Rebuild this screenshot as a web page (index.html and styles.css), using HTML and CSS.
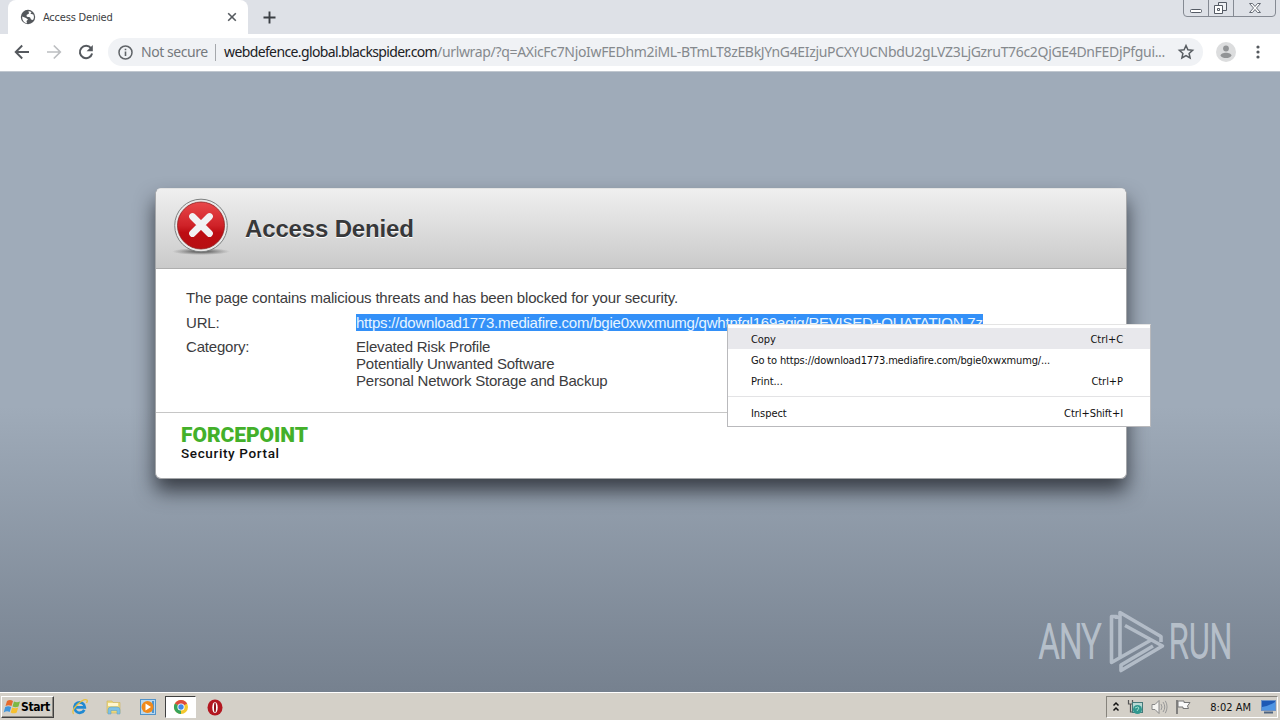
FILE: index.html
```html
<!DOCTYPE html>
<html lang="en">
<head>
<meta charset="utf-8">
<title>Access Denied</title>
<link rel="stylesheet" href="styles.css">
</head>
<body>
<div class="screen">
  <header class="tabstrip">
    <div class="tab">
      <svg class="favicon" width="16" height="16" viewBox="0 0 16 16"><circle cx="8" cy="8" r="7.2" fill="#54585c"/><path d="M2.2 7.5 6 9l2 1.500-1.500 1.500.5 2.300C4 14 2 11 2.200 7.500zM8.500 2l3 1-1 1.800 2.800.7c1 2 .8 4-.3 5.500l-2-.5-1-2.300-3.200-.5L6.500 6 9 4.600z" fill="#fff"/></svg>
      <span class="tab-title">Access Denied</span>
      <svg class="tab-close" width="10" height="10" viewBox="0 0 10 10"><path d="M1.200 1.200l7.600 7.600M8.800 1.200L1.200 8.800" stroke="#555a5f" stroke-width="1.600"/></svg>
    </div>
    <svg class="new-tab" width="13" height="13" viewBox="0 0 13 13"><path d="M6.500.5v12M.5 6.500h12" stroke="#3b3f44" stroke-width="1.900"/></svg>
    <svg class="window-buttons" width="94" height="18" viewBox="0 0 94 18"><path d="M.5 0v13q0 3.500 3.500 3.500h85q3.500 0 3.500-3.500V0M25.500 0v16M50.500 0v16" fill="none" stroke="#858a93"/><rect x="7.500" y="9.500" width="11" height="3" rx="1" fill="#fff" stroke="#555b65"/><path d="M35.500 2.500h8v8h-8z" fill="#eef0f3" stroke="#555b65"/><path d="M31.500 5.500h8v8h-8z" fill="#fff" stroke="#555b65"/><path d="M34.500 8.500h2v2h-2z" fill="none" stroke="#555b65"/><path d="M66.500 3.500h3l2.500 3 2.500-3h3l-4 4.500 4 4.500h-3l-2.500-3-2.500 3h-3l4-4.500z" fill="#fff" stroke="#666c76"/></svg>
  </header>

  <nav class="toolbar">
    <svg width="16" height="16" viewBox="0 0 16 16" class="back"><path d="M15 8H2M8.200 1.500 1.700 8l6.500 6.500" fill="none" stroke="#55595e" stroke-width="1.900"/></svg>
    <svg width="16" height="16" viewBox="0 0 16 16" class="forward"><path d="M1 8h13M7.800 1.500 14.300 8l-6.500 6.500" fill="none" stroke="#bcbec1" stroke-width="1.700"/></svg>
    <svg width="16" height="16" viewBox="0 0 16 16" class="reload"><path d="M13 4.200A6.200 6.200 0 1 0 14.100 9.500" fill="none" stroke="#55595e" stroke-width="2"/><path d="M14.800 1v6.200H8.600z" fill="#55595e"/></svg>
    <div class="omnibox">
      <svg width="15" height="15" viewBox="0 0 15 15"><circle cx="7.500" cy="7.500" r="6.500" fill="none" stroke="#606468" stroke-width="1.500"/><path d="M7.500 6.500V11M7.500 3.700v1.600" stroke="#606468" stroke-width="1.600"/></svg>
      <span class="not-secure">Not secure</span>
      <span class="divider"></span>
      <span class="host">webdefence.global.blackspider.com</span><span class="path">/urlwrap/?q=AXicFc7NjoIwFEDhm2iML-BTmLT8zEBkJYnG4EIzjuPCXYUCNbdU2gLVZ3LjGzruT76c2QjGE4DnFEDjPfgui...</span>
      <svg class="star" width="16" height="16" viewBox="0 0 16 16"><path d="M8 1.500l1.900 4.300 4.700.5-3.500 3.100 1 4.600L8 11.600 3.900 14l1-4.600L1.400 6.300l4.700-.5z" fill="none" stroke="#585d62" stroke-width="1.500"/></svg>
    </div>
    <svg class="avatar" width="20" height="20" viewBox="0 0 20 20"><circle cx="10" cy="10" r="10" fill="#dcddde"/><circle cx="10" cy="6.500" r="2.900" fill="#929496"/><path d="M4.500 13.700c0-4 11-4 11 0-2 3.200-9 3.200-11 0z" fill="#929496"/></svg>
    <svg class="more" width="4" height="16" viewBox="0 0 4 16"><g fill="#55595e"><circle cx="2" cy="3" r="1.600"/><circle cx="2" cy="8" r="1.600"/><circle cx="2" cy="13" r="1.600"/></g></svg>
  </nav>

  <main class="page">
    <section class="card">
      <div class="card-head">
        <svg width="60" height="60" viewBox="0 0 60 60">
          <defs>
            <linearGradient id="red" x1="0" y1="0" x2="0" y2="1"><stop offset="0" stop-color="#e9484a"/><stop offset=".5" stop-color="#cf2228"/><stop offset=".65" stop-color="#bd0d13"/><stop offset="1" stop-color="#b70e12"/></linearGradient>
            <radialGradient id="shade"><stop offset="0" stop-color="#333" stop-opacity=".9"/><stop offset="1" stop-color="#555" stop-opacity="0"/></radialGradient>
          </defs>
          <ellipse cx="30" cy="54.500" rx="29" ry="3.500" fill="url(#shade)"/>
          <circle cx="30" cy="28.500" r="26.300" fill="#e9e9e9" stroke="#7d8080" stroke-width="1"/>
          <circle cx="30" cy="28.500" r="23.500" fill="url(#red)" stroke="#8f2020" stroke-width=".8"/>
          <path d="M21.500 19.500l17 17M38.500 19.500l-17 17" stroke="#f1f1f3" stroke-width="6.800" stroke-linecap="round"/>
        </svg>
        <h1>Access Denied</h1>
      </div>
      <div class="card-body">
        <p class="message">The page contains malicious threats and has been blocked for your security.</p>
        <dl>
          <dt>URL:</dt>
          <dd><span class="selected">https://download1773.mediafire.com/bgie0xwxmumg/qwhtnfgl169agig/REVISED+QUATATION.7z</span></dd>
          <dt>Category:</dt>
          <dd><div>Elevated Risk Profile</div><div>Potentially Unwanted Software</div><div>Personal Network Storage and Backup</div></dd>
        </dl>
      </div>
      <div class="card-foot">
        <svg width="160" height="42" viewBox="0 0 160 42"><text class="brand" x="0" y="20" textLength="127" lengthAdjust="spacing">FORCEPOINT</text><text class="portal" x="0" y="36" textLength="98" lengthAdjust="spacing">Security Portal</text></svg>
      </div>
    </section>
    <svg class="watermark" width="240" height="70" viewBox="0 0 240 70">
      <text x="2" y="50" textLength="62" lengthAdjust="spacingAndGlyphs">ANY</text>
      <text x="132" y="50" textLength="63" lengthAdjust="spacingAndGlyphs">RUN</text>
      <g fill="none" stroke="#b9c2cd" stroke-width="3.600" stroke-linejoin="round">
        <path d="M79.500 11V8.500H74.500v46l40.500-23M83 50V4.500l41 24v5.500M88 17.500l37.500 20.500-41.500 24.500v-5.500l32-19"/>
      </g>
    </svg>
  </main>

  <div class="menu">
    <div class="item active"><span>Copy</span><span>Ctrl+C</span></div>
    <div class="item"><span class="goto">Go to https://download1773.mediafire.com/bgie0xwxmumg/...</span></div>
    <div class="item"><span>Print...</span><span>Ctrl+P</span></div>
    <div class="rule"></div>
    <div class="item"><span>Inspect</span><span>Ctrl+Shift+I</span></div>
  </div>

  <footer class="taskbar">
    <div class="start">
      <svg width="17" height="16" viewBox="0 0 17 16"><path d="M3 2q3-2 6 0L7.500 7q-3-1.500-6 0z" fill="#e66a2c"/><path d="M10 2.500q3 1.500 6 0l-1.500 5q-3 1.500-6 0z" fill="#7cb843"/><path d="M1.200 8q3-1.500 6 0l-1.500 5q-3-1.500-6 .5z" fill="#4196dc"/><path d="M8.200 8.500q3 1.500 6 0l-1.500 5q-3 1.700-6 0z" fill="#f6c02f"/></svg>
      <span>Start</span>
    </div>
    <div class="quick">
      <svg width="18" height="18" viewBox="0 0 18 18"><path d="M13.300 11.800A5.200 5.200 0 1 1 13.800 9.300H5" fill="none" stroke="#2089d2" stroke-width="2.700"/><path d="M2.500 16C-1 12 12-.5 16 2c1 1 0 2-.5 3" fill="none" stroke="#e8c03c" stroke-width="1.300"/></svg>
      <svg width="18" height="18" viewBox="0 0 18 18"><path d="M2 3h5l1 1.500h7V15H2z" fill="#ecd87d" stroke="#cdb45a" stroke-width=".6"/><path d="M3 5h10v3H3z" fill="#fff6ce"/><path d="M3 16v-4q0-3 3-3h6q3 0 3 3v4h-3v-3.500H6V16z" fill="#7dc1e5" stroke="#5c9dbf" stroke-width=".5"/></svg>
      <svg width="18" height="18" viewBox="0 0 18 18"><rect x="1.500" y="1.500" width="15" height="15" fill="#b8d8f0" stroke="#5293c9"/><rect x="13" y="3" width="2" height="12" fill="#4f94cc"/><circle cx="8.500" cy="9" r="6" fill="#f18a1c"/><path d="M6.500 5.500v7l5.500-3.500z" fill="#fff"/></svg>
      <div class="pressed"><svg width="16" height="16" viewBox="0 0 16 16"><circle cx="8" cy="8" r="7" fill="#f4c82e"/><path d="M8 8 1.900 4.500A7 7 0 0 1 14.100 4.500z" fill="#dd4b3e"/><path d="M8 8v7A7 7 0 0 1 1.900 4.500z" fill="#37a35b"/><circle cx="8" cy="8" r="3.600" fill="#fff"/><circle cx="8" cy="8" r="2.700" fill="#4289e8"/></svg></div>
      <svg width="16" height="17" viewBox="0 0 16 17"><ellipse cx="8" cy="8.500" rx="7.500" ry="8" fill="#b31720"/><ellipse cx="8" cy="8.500" rx="2.700" ry="5.500" fill="#fff"/><ellipse cx="8" cy="8.500" rx="1" ry="5" fill="#8d0d14"/></svg>
    </div>
    <div class="tray">
      <svg width="8" height="12" viewBox="0 0 8 12"><path d="M1.500 4.500 4 2l2.500 2.500M1.500 9.500 4 7l2.500 2.500" fill="none" stroke="#111" stroke-width="1.500"/></svg>
      <svg width="17" height="17" viewBox="0 0 17 17"><path d="M1.500 1v4h4V1M3.500 5v8h3" fill="none" stroke="#555" stroke-width="1.200"/><rect x="5.500" y="3.500" width="10" height="10" fill="#b8d9d4" stroke="#477a7a"/><circle cx="10.500" cy="10.500" r="4.500" fill="#31988f"/><path d="M8 9q3-2 4 0l-2 3" stroke="#a6e0cf" fill="none"/></svg>
      <svg width="17" height="16" viewBox="0 0 17 16"><path d="M1 5.500h3l4-4v13l-4-4H1z" fill="#f5f4f1" stroke="#888"/><path d="M10 5q2 3 0 6M12 3q3.500 5 0 10M14.300 1.800q3.500 6 0 12.400" fill="none" stroke="#999"/></svg>
      <svg width="17" height="16" viewBox="0 0 17 16"><path d="M2 1v14" stroke="#666" stroke-width="1.500"/><path d="M3 2h6v1.500h6L12.500 7l1 2.500H8V8H3z" fill="#fafafa" stroke="#777"/></svg>
      <span class="clock">8:02 AM</span>
      <svg width="15" height="14" viewBox="0 0 15 14"><rect x=".5" y=".5" width="14" height="10" fill="#1d59b5" stroke="#6c92c6"/><path d="M1 7Q8 6 14 2v8H1z" fill="#4f95e3"/><path d="M3 12.500h9" stroke="#4f6480" stroke-width="2"/></svg>
    </div>
  </footer>
</div>
</body>
</html>
```
FILE: styles.css
```css
* { box-sizing: border-box; }
body { margin: 0; overflow: hidden; font-family: "Liberation Sans", Arial, sans-serif; }
svg { display: block; flex: none; overflow: visible; }
span { white-space: nowrap; }
.screen { position: relative; width: 1280px; height: 720px; display: flex; flex-direction: column; }

.tabstrip { height: 34px; flex: none; background: #dee1e7; display: flex; align-items: flex-start; }
.tab { width: 240px; height: 34px; margin-left: 8px; padding: 0 11px 0 12px; background: #fff; border-radius: 8px 8px 0 0; display: flex; align-items: center; }
.tab-title { margin-left: 7px; font: 11px "DejaVu Sans Condensed", "DejaVu Sans", sans-serif; letter-spacing: -.2px; color: #3c4043; }
.tab-close { margin-left: auto; }
.new-tab { margin: 11px 0 0 15px; }
.window-buttons { margin-left: auto; margin-right: 3px; }

.toolbar { height: 38px; flex: none; background: #fff; border-bottom: 1px solid #c0c7cf; display: flex; align-items: center; padding: 0 20px 1px 14px; }
.forward, .reload { margin-left: 16px; }
.omnibox { width: 1095px; height: 28px; margin-left: 14px; padding: 0 9px 0 10px; background: #f0f2f5; border-radius: 14px; display: flex; align-items: center; font: 14px/18px "Noto Sans", sans-serif; color: #75797d; }
.omnibox > .not-secure { margin-left: 8px; width: 67px; letter-spacing: -.45px; }
.omnibox > .divider { width: 1px; height: 17px; margin: 0 8px 0 7px; background: #a5a8ac; }
.host { color: #202124; width: 213px; letter-spacing: -.62px; }
.path { color: #85898d; width: 728px; letter-spacing: -.33px; }
.star { margin-left: auto; }
.avatar { margin-left: 13px; }
.more { margin-left: auto; }

.page { flex: 1; position: relative; padding: 116px 153px 0 155px; background: linear-gradient(#9fabb9 0, #9fabb9 54%, #76818f 100%); }
.card { width: 972px; height: 291px; border-radius: 6px; background: #fff; border: 1px solid #a4a6a9; border-top-color: #e2e2e2; box-shadow: 0 12px 20px 0 rgba(25,28,35,.75); display: flex; flex-direction: column; overflow: hidden; }
.card-head { height: 80px; flex: none; display: flex; align-items: center; padding-left: 15px; background: linear-gradient(#efefef, #cacaca); border-bottom: 1px solid #aeaeae; }
.card-head svg { margin-bottom: 3px; }
.card-head h1 { margin: 1px 0 0 14px; font-size: 24px; font-weight: bold; line-height: 28px; color: #37383a; letter-spacing: -.15px; text-shadow: 0 1px 0 #fff; }
.card-body { height: 143px; flex: none; padding: 20px 30px 0; font-size: 15px; line-height: 17px; color: #3c3c3e; letter-spacing: -.2px; }
.message { margin: 0 0 8px; letter-spacing: -.175px; }
dl { margin: 0; display: grid; grid-template-columns: 170px 1fr; row-gap: 7px; }
dd { margin: 0; white-space: nowrap; }
.selected { display: inline-block; background: #3390f8; color: #e7f5ff; letter-spacing: -.227px; }
.card-foot { flex: 1; border-top: 1px solid #c6c6c6; padding: 9px 25px; }
.brand { font: 900 21px Roboto, sans-serif; fill: #43b02a; }
.portal { font: 500 13.5px Roboto, sans-serif; fill: #111; }
.watermark { position: absolute; left: 1037px; top: 536px; opacity: .9; }
.watermark text { font: 300 49px Roboto, sans-serif; fill: #bcc5cf; stroke: #bcc5cf; stroke-width: 1.8px; }

.menu { position: absolute; left: 727px; top: 324px; width: 424px; height: 103px; padding-top: 3px; background: #fff; border: 1px solid #b9b9bc; border-top-color: #e4e4e4; font: 11px/23px "DejaVu Sans Condensed", "DejaVu Sans", sans-serif; color: #111; }
.item { height: 21px; padding: 0 27px 0 23px; display: flex; justify-content: space-between; letter-spacing: -.05px; }
.item .goto { letter-spacing: -.165px; }
.item.active { background: #e8e8ec; }
.rule { height: 1px; margin: 5px 0; background: #e3e3e5; }

.taskbar { height: 28px; flex: none; background: #d4d0c8; border-top: 1px solid #fff; display: flex; align-items: center; padding: 1px 2px 0 1px; }
.start { width: 53px; height: 22px; padding-left: 2px; border: 1px solid; border-color: #fff #404040 #404040 #fff; box-shadow: inset -1px -1px #8c8982; display: flex; align-items: center; font: bold 12px "DejaVu Sans Condensed", sans-serif; letter-spacing: -.4px; color: #000; }
.quick { display: flex; align-items: center; margin-left: 17px; gap: 16px; }
.quick > .pressed { margin-left: -8px; margin-right: -5px; width: 31px; height: 22px; background: #fff; border: 1px solid; border-color: #404040 #fff #fff #404040; display: flex; align-items: center; justify-content: center; }
.tray { width: 172px; height: 22px; margin-left: auto; padding: 0 1px 0 5px; border: 1px solid; border-color: #86837c #fff #fff #86837c; display: flex; align-items: center; gap: 7px; }
.clock { margin: 0 3px 0 auto; font: 11px "DejaVu Sans Condensed", sans-serif; color: #111; }
```
